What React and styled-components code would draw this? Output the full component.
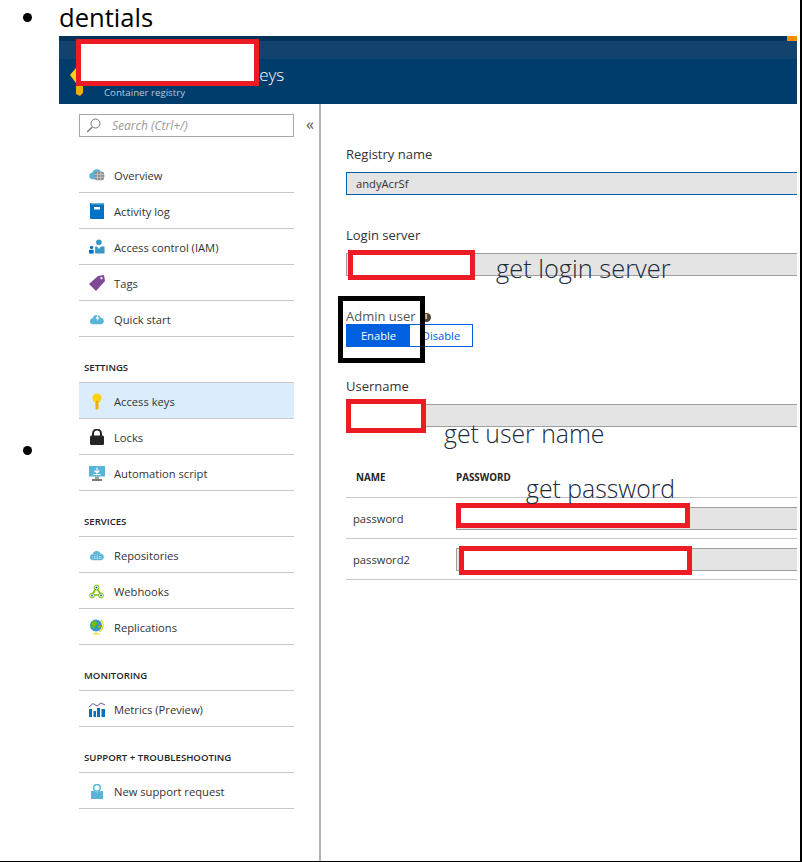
import React from "react";
import styled, { createGlobalStyle } from "styled-components";

const GlobalStyle = createGlobalStyle`
  html, body {
    margin: 0;
    padding: 0;
    background: #fff;
  }
  body {
    font-family: "Open Sans", "Liberation Sans", sans-serif;
    color: #252525;
  }
`;

const Page = styled.div`
  position: relative;
  width: 802px;
  height: 862px;
  overflow: hidden;
  box-sizing: border-box;
  border-right: 2px solid #000;
  border-bottom: 1px solid #000;
`;

const Bullets = styled.div`
  width: 59px;
  flex: none;
  display: flex;
  flex-direction: column;
  align-items: flex-start;
  padding: 13px 0 0 23px;
  box-sizing: border-box;
`;

const Dot = styled.span`
  width: 9px;
  height: 9px;
  border-radius: 50%;
  background: #000;
  margin-top: ${(p) => p.$top}px;
`;

const Layout = styled.div`
  display: flex;
  height: 100%;
`;

const Content = styled.div`
  flex: 1;
  min-width: 0;
  display: flex;
  flex-direction: column;
`;

const Heading = styled.div`
  height: 36px;
  font-size: 25.6px;
  line-height: 35px;
  color: #000;
`;

const Blade = styled.header`
  height: 68px;
  background: #003c6c;
  display: flex;
  flex-direction: column;
  margin-right: 3px;
  color: #fff;
  position: relative;
`;

const BarTop = styled.div`
  height: 5px;
  background: #04335a;
`;

const BarMid = styled.div`
  height: 18px;
  background: #12436f;
`;

const BladeBody = styled.div`
  flex: 1;
  display: flex;
  padding-left: 45px;
  flex-direction: column;
  align-items: flex-start;
`;

const BladeTitle = styled.div`
  font-size: 17px;
  line-height: 24px;
  margin: 4px 0 -1px 147px;
  font-weight: 300;
`;

const BladeSub = styled.div`
  font-size: 9.7px;
  line-height: 13px;
  color: #b9c9d8;
`;

const Corner = styled.span`
  position: absolute;
  top: 0;
  right: 0;
  width: 10px;
  height: 5px;
  background: #ff8c00;
`;

const KeyMark = styled.svg`
  position: absolute;
  left: 11px;
  top: 32px;
`;

const Redact = styled.div`
  position: absolute;
  left: ${(p) => p.$x}px;
  top: ${(p) => p.$y}px;
  width: ${(p) => p.$w}px;
  height: ${(p) => p.$h}px;
  box-sizing: border-box;
  background: ${(p) => (p.$open ? "transparent" : "#fff")};
  border: 5px solid ${(p) => p.$color || "#ed1c24"};
`;

const Split = styled.div`
  flex: 1;
  display: flex;
  min-height: 0;
`;

const Sidebar = styled.nav`
  width: 262px;
  flex: none;
  box-sizing: border-box;
  border-right: 2px solid #b4b4b4;
  padding: 10px 25px 0 20px;
  position: relative;
`;

const SearchBox = styled.div`
  height: 23px;
  border: 1px solid #a6a6a6;
  box-sizing: border-box;
  display: flex;
  align-items: center;
  gap: 11px;
  padding-left: 6px;
  font-size: 12px;
  font-style: italic;
  color: #9a9a9a;
`;

const Collapse = styled.span`
  position: absolute;
  right: 5px;
  top: 10px;
  font-size: 16px;
  line-height: 20px;
  color: #555;
`;

const Group = styled.div`
  margin-top: ${(p) => p.$top}px;
`;

const GroupTitle = styled.div`
  font-size: 9.6px;
  font-weight: 600;
  line-height: 12px;
  padding: 0 0 8px 5px;
  color: #252525;
  border-bottom: 1px solid #c8c8c8;
`;

const Item = styled.div`
  height: 34px;
  padding-top: 1px;
  display: flex;
  align-items: center;
  border-bottom: 1px solid #c8c8c8;
  background: ${(p) => (p.$active ? "#dbedfc" : "transparent")};
  font-size: 11.2px;
  color: #333;
`;

const ItemIcon = styled.span`
  width: 35px;
  flex: none;
  display: flex;
  justify-content: center;
`;

const Main = styled.main`
  flex: 1;
  min-width: 0;
  padding: 41px 3px 0 25px;
  position: relative;
`;

const Label = styled.div`
  font-size: 13px;
  line-height: 18px;
  color: ${(p) => p.$color || "#333"};
  margin-top: ${(p) => p.$top || 0}px;
  display: flex;
  align-items: center;
`;

const Field = styled.div`
  height: 23px;
  margin-top: ${(p) => p.$top || 0}px;
  background: #e4e4e4;
  border: 1px solid ${(p) => (p.$focus ? "#0063b1" : "#a0a0a0")};
  border-right: none;
  box-sizing: border-box;
  font-size: 11.2px;
  line-height: 21px;
  padding-left: 9px;
  color: #333;
`;

const InfoDot = styled.span`
  display: inline-flex;
  align-items: center;
  justify-content: center;
  width: 9px;
  height: 9px;
  border-radius: 50%;
  background: #444;
  color: #fff;
  font-size: 7px;
  font-weight: 700;
  margin: 2px 0 0 6px;
`;

const Toggle = styled.div`
  display: flex;
  width: 127px;
  height: 23px;
  margin-top: -1px;
  box-sizing: border-box;
  border: 1px solid #0060df;
  font-size: 11.2px;
`;

const ToggleOption = styled.div`
  display: flex;
  align-items: center;
  justify-content: center;
  flex: ${(p) => (p.$on ? "0 0 63px" : 1)};
  background: ${(p) => (p.$on ? "#0060df" : "#fff")};
  color: ${(p) => (p.$on ? "#fff" : "#0060df")};
`;

const Note = styled.div`
  position: absolute;
  left: ${(p) => p.$x}px;
  top: ${(p) => p.$y}px;
  font-size: ${(p) => p.$size}px;
  line-height: 30px;
  font-weight: 300;
  color: #1a2a3a;
  white-space: nowrap;
`;

const TableHead = styled.div`
  display: grid;
  grid-template-columns: 110px 1fr;
  height: 47px;
  margin-top: 24px;
  border-bottom: 1px solid #c8c8c8;
  font-size: 9.8px;
  font-weight: 700;
  line-height: 12px;
  padding-top: 21px;
  box-sizing: border-box;
  color: #252525;
`;

const HeadCell = styled.span`
  padding-left: ${(p) => p.$pad}px;
`;

const Row = styled.div`
  display: grid;
  grid-template-columns: 110px 1fr;
  height: 41px;
  box-sizing: border-box;
  align-items: center;
  border-bottom: 1px solid #c8c8c8;
  font-size: 11.2px;
  color: #333;
`;

const RowName = styled.span`
  padding-left: 7px;
`;

const icons = {
  overview: (
    <svg width="16" height="14" viewBox="0 0 17 15">
      <path d="M4 12a3.5 3.5 0 0 1-.5-7A5 5 0 0 1 13 4.500 3.800 3.800 0 0 1 13.500 12z" fill="#59b4d9" />
      <rect x="6" y="4" width="10" height="9" rx="2" fill="#8c8c8c" />
      <path d="M6 7h10M6 10h10M9 4v9M12.500 4v9" stroke="#d0d0d0" strokeWidth="0.8" />
    </svg>
  ),
  log: (
    <svg width="14" height="16" viewBox="0 0 14 16">
      <path d="M0 0h14v16H1a1 1 0 0 1-1-1z" fill="#0072c6" />
      <path d="M1 0h13v1.500H1z" fill="#59b4d9" />
      <rect x="4" y="4" width="6" height="2.500" fill="#fff" />
    </svg>
  ),
  iam: (
    <svg width="16" height="16" viewBox="0 0 17 16">
      <circle cx="10.500" cy="3" r="3" fill="#3999c6" />
      <path d="M6.500 15V7.500h2l2 2.500 2-2.500h4V15z" fill="#3999c6" />
      <circle cx="2.800" cy="8.500" r="1.800" fill="#0072c6" />
      <path d="M0 15v-4h5v4z" fill="#0072c6" />
    </svg>
  ),
  tag: (
    <svg width="16" height="16" viewBox="0 0 16 16">
      <path d="M0 9 9 1l6-1 1 6-9 10z" fill="#804998" />
      <circle cx="12.500" cy="3.200" r="1.100" fill="#fff" />
    </svg>
  ),
  quick: (
    <svg width="16" height="11" viewBox="0 0 17 13">
      <path d="M4 12a3.500 3.500 0 0 1-.5-7A5 5 0 0 1 13 4.500 3.800 3.800 0 0 1 13.500 12z" fill="#59b4d9" />
      <path d="M9.500 0 7 5.500h2L8 9l3.500-5h-2z" fill="#fff" />
    </svg>
  ),
  key: (
    <svg width="10" height="17" viewBox="0 0 10 17">
      <circle cx="5" cy="5" r="4.600" fill="#fcd116" />
      <path d="M3.500 8h3v7.500L5 17l-1.500-1.500z" fill="#eab200" />
    </svg>
  ),
  lock: (
    <svg width="14" height="16" viewBox="0 0 14 16">
      <path d="M3 7V4.500a4 4 0 0 1 8 0V7" fill="none" stroke="#252525" strokeWidth="2" />
      <rect x="0" y="6.500" width="14" height="9.500" rx="1.500" fill="#252525" />
    </svg>
  ),
  script: (
    <svg width="16" height="15" viewBox="0 0 16 15">
      <rect x="0" y="0" width="16" height="10.500" fill="#59b4d9" />
      <path d="M8 1.500v5M5.500 4.500 8 7l2.500-2.500M4.500 8.500h7" stroke="#fff" strokeWidth="1.100" fill="none" />
      <rect x="6" y="10.500" width="4" height="2.500" fill="#a0a1a2" />
      <rect x="3" y="13" width="10" height="2" fill="#7a7a7a" />
    </svg>
  ),
  repo: (
    <svg width="16" height="11" viewBox="0 0 17 13">
      <path d="M4 12a3.500 3.500 0 0 1-.5-7A5 5 0 0 1 13 4.500 3.800 3.800 0 0 1 13.500 12z" fill="#59b4d9" />
      <path d="M3 10h11M3 8h11M6 5v6M9 4v7M12 5v6" stroke="#fff" strokeWidth="0.7" strokeDasharray="1 1" />
    </svg>
  ),
  hook: (
    <svg width="15" height="15" viewBox="0 0 15 15">
      <path d="M7.500 3.500 3 11h9z" fill="none" stroke="#7fba00" strokeWidth="1.600" />
      <circle cx="7.500" cy="3.500" r="2.400" fill="#fff" stroke="#7fba00" />
      <circle cx="7.500" cy="3.500" r="1" fill="#0072c6" />
      <circle cx="3" cy="11.500" r="2.400" fill="#fff" stroke="#7fba00" />
      <circle cx="3" cy="11.500" r="1" fill="#0072c6" />
      <circle cx="12" cy="11.500" r="2.400" fill="#fff" stroke="#7fba00" />
      <circle cx="12" cy="11.500" r="1" fill="#0072c6" />
    </svg>
  ),
  globe: (
    <svg width="15" height="16" viewBox="0 0 15 16">
      <circle cx="7" cy="6.500" r="6" fill="#3999c6" />
      <path d="M3 3c2-1 4-1 5 1s-2 2-2 4-3 0-3-1zM9 7l3-1c0 2-1 4-2 4z" fill="#7fba00" />
      <path d="M12 1a7 7 0 0 1-2 11.500M7 13v2M4 15h7" stroke="#fcd116" strokeWidth="1.200" fill="none" />
    </svg>
  ),
  metrics: (
    <svg width="16" height="15" viewBox="0 0 16 15">
      <path d="M0 5 4 1.500 8 4l4-3 4 2" fill="none" stroke="#804998" strokeWidth="1" />
      <path d="M0 7h3v8H0zM4.500 9H7v6H4.500zM8 6h3v9H8zM12.500 7H16v8h-3.500z" fill="#0072c6" />
    </svg>
  ),
  support: (
    <svg width="12" height="15" viewBox="0 0 12 15">
      <path d="M0 7h3.500a3 3 0 0 0 5 0H12v8H0z" fill="#59b4d9" />
      <circle cx="6" cy="3.800" r="3.300" fill="#fff" stroke="#59b4d9" strokeWidth="1.500" />
    </svg>
  ),
};

const SearchIcon = () => (
  <svg width="15" height="15" viewBox="0 0 14 15">
    <circle cx="9" cy="5.500" r="4.500" fill="none" stroke="#777" strokeWidth="1" />
    <path d="M5.700 9 .7 14" stroke="#777" strokeWidth="1.300" />
  </svg>
);

function NavItem({ icon, label, active }) {
  return (
    <Item $active={active}>
      <ItemIcon>{icons[icon]}</ItemIcon>
      {label}
    </Item>
  );
}

const groups = [
  {
    top: 20,
    items: [
      ["overview", "Overview"],
      ["log", "Activity log"],
      ["iam", "Access control (IAM)"],
      ["tag", "Tags"],
      ["quick", "Quick start"],
    ],
  },
  {
    title: "SETTINGS",
    top: 25,
    items: [
      ["key", "Access keys", true],
      ["lock", "Locks"],
      ["script", "Automation script"],
    ],
  },
  {
    title: "SERVICES",
    top: 25,
    items: [
      ["repo", "Repositories"],
      ["hook", "Webhooks"],
      ["globe", "Replications"],
    ],
  },
  {
    title: "MONITORING",
    top: 25,
    items: [["metrics", "Metrics (Preview)"]],
  },
  {
    title: "SUPPORT + TROUBLESHOOTING",
    top: 25,
    items: [["support", "New support request"]],
  },
];

export default function App() {
  return (
    <Page>
      <GlobalStyle />
      <Layout>
        <Bullets>
          <Dot $top={0} />
          <Dot $top={424} />
        </Bullets>
        <Content>
          <Heading>dentials</Heading>
          <Blade>
            <BarTop />
            <BarMid />
            <BladeBody>
              <BladeTitle>keys</BladeTitle>
              <BladeSub>Container registry</BladeSub>
            </BladeBody>
            <Corner />
            <KeyMark width="13" height="28" viewBox="0 0 13 28">
              <path d="M0 7 6 0h7v15H6z" fill="#fcd116" />
              <path d="M6 15h7v10l-3 3-4-2z" fill="#eab200" />
            </KeyMark>
          </Blade>
          <Split>
            <Sidebar>
              <SearchBox>
                <SearchIcon />
                Search (Ctrl+/)
              </SearchBox>
              <Collapse>«</Collapse>
              {groups.map((g) => (
                <Group key={g.title || "top"} $top={g.top}>
                  {g.title && <GroupTitle>{g.title}</GroupTitle>}
                  {g.items.map(([icon, label, active]) => (
                    <NavItem key={label} icon={icon} label={label} active={active} />
                  ))}
                </Group>
              ))}
            </Sidebar>
            <Main>
              <Label>Registry name</Label>
              <Field $top={9} $focus>andyAcrSf</Field>
              <Label $top={31}>Login server</Label>
              <Field $top={9} />
              <Label $top={31} $color="#555">
                Admin user<InfoDot>i</InfoDot>
              </Label>
              <Toggle>
                <ToggleOption $on>Enable</ToggleOption>
                <ToggleOption>Disable</ToggleOption>
              </Toggle>
              <Label $top={30}>Username</Label>
              <Field $top={9} />
              <TableHead>
                <HeadCell $pad={10}>NAME</HeadCell>
                <HeadCell $pad={0}>PASSWORD</HeadCell>
              </TableHead>
              <Row>
                <RowName>password</RowName>
                <Field />
              </Row>
              <Row>
                <RowName>password2</RowName>
                <Field />
              </Row>
            </Main>
          </Split>
        </Content>
      </Layout>
      <Redact $x={76} $y={39} $w={183} $h={47} />
      <Redact $x={348} $y={250} $w={127} $h={30} />
      <Redact $x={346} $y={399} $w={80} $h={34} />
      <Redact $x={456} $y={503} $w={234} $h={25} />
      <Redact $x={459} $y={546} $w={233} $h={29} />
      <Redact $x={338} $y={296} $w={87} $h={67} $open $color="#000" />
      <Note $x={496} $y={253} $size={25.4}>get login server</Note>
      <Note $x={444} $y={418} $size={24.8}>get user name</Note>
      <Note $x={526} $y={473} $size={24.8}>get password</Note>
    </Page>
  );
}
